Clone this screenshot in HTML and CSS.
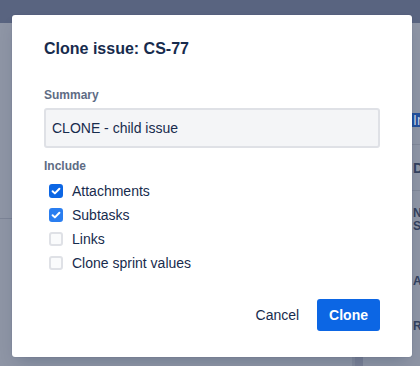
FILE: index.html
```html
<!DOCTYPE html>
<html lang="en">
<head>
    <meta charset="UTF-8">
    <meta name="viewport" content="width=device-width, initial-scale=1.0">
    <title>Clone issue</title>
    <link rel="stylesheet" href="styles.css">
</head>
<body>

    <div class="topbar"></div>
    <div class="page">
        <div class="page-main">
            <div class="page-line"></div>
        </div>
        <div class="page-side">
            <div class="side-tab">In</div>
            <div class="side-row side-head">D</div>
            <div class="side-row side-two">N<br>S</div>
            <div class="side-row side-a">A</div>
            <div class="side-row side-r">R</div>
        </div>
    </div>
    <div class="page-foot">
        <div class="foot-strip"></div>
    </div>

    <form class="modal" autocomplete="off">
        <h1 class="modal-title">Clone issue: CS-77</h1>

        <label class="field-label" for="summary">Summary</label>
        <input class="field-input" type="text" id="summary" name="summary" value="CLONE - child issue">

        <p class="field-label include-label">Include</p>
        <div class="check-list">
            <label class="check-row">
                <span class="box checked">
                    <svg viewBox="0 0 14 14" width="14" height="14"><path d="M3.6 7.2l2.3 2.2 4.5-4.6" fill="none" stroke="#fff" stroke-width="2" stroke-linecap="round" stroke-linejoin="round"/></svg>
                </span>
                Attachments
            </label>
            <label class="check-row">
                <span class="box checked hover">
                    <svg viewBox="0 0 14 14" width="14" height="14"><path d="M3.6 7.2l2.3 2.2 4.5-4.6" fill="none" stroke="#fff" stroke-width="2" stroke-linecap="round" stroke-linejoin="round"/></svg>
                </span>
                Subtasks
            </label>
            <label class="check-row">
                <span class="box"></span>
                Links
            </label>
            <label class="check-row">
                <span class="box"></span>
                Clone sprint values
            </label>
        </div>

        <div class="modal-footer">
            <button type="button" class="btn btn-subtle">Cancel</button>
            <button type="button" class="btn btn-primary">Clone</button>
        </div>
    </form>

</body>
</html>
```

FILE: styles.css
```css
* {
    margin: 0;
    padding: 0;
    box-sizing: border-box;
    font-family: "Liberation Sans", Arial, Helvetica, sans-serif;
}
body {
    width: 420px;
    height: 366px;
    overflow: hidden;
    background-color: #8e95a5;
}
.topbar {
    height: 23px;
    background-color: #596480;
}
.page {
    display: flex;
    height: 334px;
}
.page-main {
    width: 411px;
    flex-shrink: 0;
    padding-top: 195px;
}
.page-line {
    width: 14px;
    height: 1px;
    background-color: #7c8496;
}
.page-side {
    width: 200px;
    flex-shrink: 0;
    border-left: 1px solid #848b9c;
    padding-top: 90px;
    color: #33415e;
}
.side-tab {
    height: 14px;
    padding-left: 1px;
    background-color: #22509c;
    color: #c9d3e4;
    font-size: 14px;
    line-height: 14px;
}
.side-row {
    padding-left: 1px;
    font-size: 12px;
    font-weight: bold;
}
.side-head {
    margin-top: 17px;
    border-top: 1px solid #808898;
    border-bottom: 1px solid #808898;
    height: 47px;
    line-height: 47px;
    font-size: 14px;
}
.side-two {
    padding-top: 16px;
    line-height: 13px;
}
.side-a {
    padding-top: 42px;
    line-height: 13px;
}
.side-r {
    padding-top: 32px;
    line-height: 13px;
}
.page-foot {
    height: 9px;
}
.foot-strip {
    margin-left: 352px;
    width: 11px;
    height: 9px;
    background-color: #7a8196;
    border-left: 3px solid #838a9c;
}

.modal {
    position: absolute;
    left: 12px;
    top: 15px;
    width: 400px;
    padding: 24px 32px 26px;
    background-color: #fff;
    border-radius: 3px;
    box-shadow: 0 0 1px rgba(9, 30, 66, 0.31), 0 8px 16px -6px rgba(9, 30, 66, 0.25);
}
.modal-title {
    font-size: 16px;
    line-height: 20px;
    font-weight: bold;
    color: #172b4d;
    margin-bottom: 28px;
}
.field-label {
    display: block;
    font-size: 12px;
    line-height: 16px;
    font-weight: bold;
    color: #5e6c84;
    margin-bottom: 5px;
}
.field-input {
    display: block;
    width: 100%;
    height: 40px;
    padding: 0 6px;
    border: 2px solid #dfe1e6;
    border-radius: 3px;
    background-color: #f4f5f7;
    color: #172b4d;
    font-size: 14px;
    outline: none;
}
.include-label {
    margin-top: 10px;
}
.check-row {
    display: flex;
    align-items: center;
    height: 24px;
    padding-left: 5px;
    font-size: 14px;
    color: #172b4d;
}
.box {
    width: 14px;
    height: 14px;
    margin-right: 9px;
    border: 2px solid #dfe1e6;
    border-radius: 3px;
    background-color: #fafbfc;
    display: flex;
}
.box svg {
    margin: -2px;
}
.box.checked {
    border-color: #0c66e4;
    background-color: #0c66e4;
}
.box.hover {
    border-color: #2a7ef0;
    background-color: #2a7ef0;
}
.modal-footer {
    display: flex;
    justify-content: flex-end;
    gap: 8px;
    margin-top: 24px;
}
.btn {
    height: 32px;
    border: none;
    border-radius: 3px;
    font-size: 14px;
    cursor: pointer;
}
.btn-subtle {
    padding: 0 10px;
    background: none;
    color: #172b4d;
}
.btn-primary {
    padding: 0 12px;
    background-color: #0c66e4;
    color: #fff;
    font-weight: bold;
}
```
